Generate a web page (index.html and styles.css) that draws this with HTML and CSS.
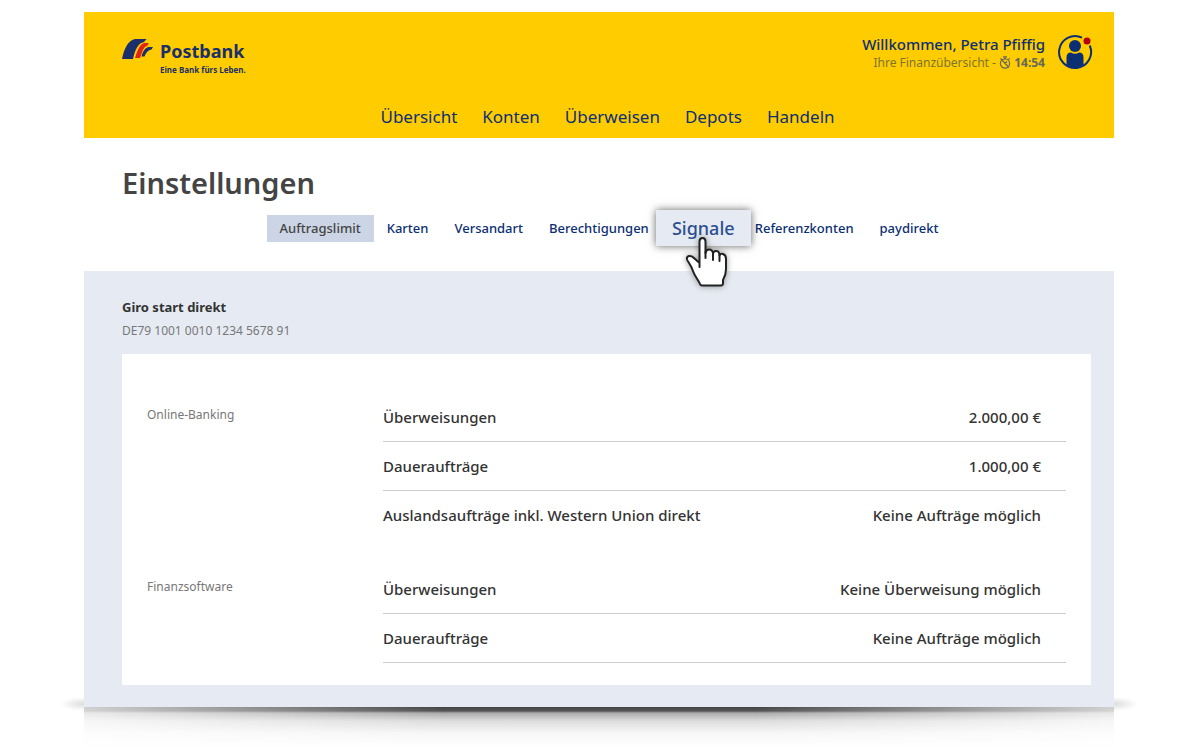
FILE: index.html
```html
<!DOCTYPE html>
<html lang="de">
<head>
<meta charset="utf-8">
<title>Postbank – Einstellungen</title>
<link rel="stylesheet" href="styles.css">
</head>
<body>
<div class="window">
  <header class="header">
    <div class="header-top">
      <a class="brand" href="#">
        <svg class="brand-mark" viewBox="0 0 32 22" width="32" height="22" aria-hidden="true">
          <path d="M0 21C2 12 5 3 13 1H24.500L22 4C16 5 13 12 11 21Z" fill="#1a2f6b"/>
          <path d="M13 20C15 13 18 6 22 5H27L25 8C21 9 20 15 18 20Z" fill="#e2231a"/>
          <path d="M19.500 18.500C21 13 23 9.500 27 9H31L29.500 11.500C26 12 24 14.500 22.500 18.500Z" fill="#1a2f6b"/>
        </svg>
        <span class="brand-text">
          <span class="brand-name">Postbank</span>
          <span class="brand-claim">Eine Bank fürs Leben.</span>
        </span>
      </a>
      <div class="user">
        <div class="user-text">
          <div class="user-name">Willkommen, Petra Pfiffig</div>
          <div class="user-info">Ihre Finanzübersicht -
            <svg class="timer" viewBox="0 0 12 13" width="12" height="13" aria-hidden="true">
              <g fill="none" stroke="#66675c" stroke-width="1.200"><circle cx="6" cy="7.500" r="4.600"/><path d="M4 .8H8M6 1V3M9.500 3.500L10.700 2.300M1.500 2.500L10 11.500M6 7.500L8 5.500"/></g>
            </svg>
            <b>14:54</b></div>
        </div>
        <button class="avatar" aria-label="Profil">
          <svg viewBox="0 0 36 36" width="36" height="36" aria-hidden="true">
            <path d="M32.700 11.500A16 16 0 1 1 25 3.600" fill="none" stroke="#0c2f74" stroke-width="2"/>
            <circle cx="18" cy="12" r="6" fill="#0c2f74"/>
            <path d="M9.500 31V23.500Q9.500 18.500 14 18.500Q18 21 22 18.500Q26.500 18.500 26.500 23.500V31Q18 37 9.500 31Z" fill="#0c2f74"/>
            <circle cx="30" cy="7" r="3.500" fill="#b5000f"/>
          </svg>
        </button>
      </div>
    </div>
    <nav class="main-nav">
      <a href="#">Übersicht</a><a href="#">Konten</a><a href="#">Überweisen</a><a href="#">Depots</a><a href="#">Handeln</a>
    </nav>
  </header>
  <section class="settings">
    <h1>Einstellungen</h1>
    <nav class="tabs">
      <a class="tab active" href="#">Auftragslimit</a>
      <a class="tab" href="#">Karten</a>
      <a class="tab" href="#">Versandart</a>
      <a class="tab" href="#">Berechtigungen</a>
      <span class="tab-slot">
        <a class="tab-zoom" href="#">Signale</a>
        <svg class="pointer" viewBox="0 0 44 52" width="44" height="52" aria-hidden="true">
          <path d="M14.500 31V5.500Q14.500 2 17.500 2Q20.500 2 20.500 5.500V17Q21 13.500 24 13.500Q27.500 13.500 28 17.500Q29 14.500 31.500 15Q34.500 15.500 34.500 19.500Q35.500 17 38 18Q41 19 41 23V33Q41 39 38 44V48Q37.500 49.500 36 49.500H17Q15.500 49.500 15 48C13 43 10 41 8 35C6 29 3 26 2 23.500Q1.500 20.500 4 20Q7 19.500 9.500 22.500L14.500 27" fill="#fff" stroke="#222" stroke-width="2" stroke-linejoin="round" stroke-linecap="round"/>
          <path d="M20.500 16V22M28 17V24M34.500 19V25" fill="none" stroke="#222" stroke-width="2" stroke-linecap="round"/>
        </svg>
      </span>
      <a class="tab" href="#">Referenzkonten</a>
      <a class="tab" href="#">paydirekt</a>
    </nav>
  </section>
  <main class="content">
    <h2>Giro start direkt</h2>
    <p class="iban">DE79 1001 0010 1234 5678 91</p>
    <div class="card">
      <section class="group">
        <h3>Online-Banking</h3>
        <table>
          <tr><th scope="row">Überweisungen</th><td>2.000,00 €</td></tr>
          <tr><th scope="row">Daueraufträge</th><td>1.000,00 €</td></tr>
          <tr class="plain"><th scope="row">Auslandsaufträge inkl. Western Union direkt</th><td>Keine Aufträge möglich</td></tr>
        </table>
      </section>
      <section class="group">
        <h3>Finanzsoftware</h3>
        <table>
          <tr><th scope="row">Überweisungen</th><td>Keine Überweisung möglich</td></tr>
          <tr><th scope="row">Daueraufträge</th><td>Keine Aufträge möglich</td></tr>
        </table>
      </section>
    </div>
  </main>
  <div class="shade"></div>
</div>
</body>
</html>
```
FILE: styles.css
```css
* { box-sizing: border-box; }
body { margin: 0; background: #fff; font-family: "Noto Sans", "Open Sans", sans-serif; color: #333; }
a { color: inherit; text-decoration: none; }
h1, h2, h3, p { margin: 0; }
.window { margin: 12px 86px 0 84px; }
.header { background: #fc0; color: #0c2f74; padding: 22px 21px 3px 38px; }
.header-top { display: flex; justify-content: space-between; align-items: flex-start; height: 65px; }
.brand { display: flex; gap: 6px; padding-top: 4px; color: #1a2f6b; }
.brand-text { display: flex; flex-direction: column; }
.brand-name { font-size: 18px; line-height: 26px; font-weight: 700; }
.brand-claim { font-size: 8px; line-height: 12px; font-weight: 700; }
.user { display: flex; gap: 12px; text-align: right; }
.user-name { font-size: 15px; line-height: 20px; font-weight: 500; }
.user-info { font-size: 12px; line-height: 17px; color: #7d7433; }
.user-info b { color: #66675c; }
.timer { vertical-align: -2px; }
.avatar { border: 0; padding: 0; background: none; width: 36px; height: 36px; }
.main-nav { display: flex; justify-content: center; gap: 25px; padding: 8px 0; font-size: 17px; line-height: 20px; }
.settings { padding: 25px 22px 29px 38px; }
h1 { font-size: 29px; line-height: 40px; font-weight: 600; color: #444; }
.tabs { display: flex; justify-content: center; margin-top: 12px; padding-left: 4px; color: #0c2f74; font-size: 13px; line-height: 27px; font-weight: 500; }
.tab { padding: 0 13px; }
.tab.active { background: #cbd5e5; color: #444; }
.tab-slot { position: relative; width: 80px; }
.tab-zoom { position: absolute; left: -6px; top: -5px; width: 95px; text-align: center; background: #e6ebf3; color: #2c4f90; font-size: 18px; line-height: 36px; box-shadow: 0 0 8px rgba(0,0,0,.6); }
.pointer { position: absolute; left: 23px; top: 21px; filter: drop-shadow(0 0 3px rgba(0,0,0,.4)); }
.content { background: #e6ebf3; padding: 26px 23px 22px 38px; }
h2 { font-size: 13px; line-height: 20px; font-weight: 700; }
.iban { font-size: 12px; line-height: 18px; margin-top: 5px; color: #777; }
.card { background: #fff; margin-top: 14px; padding: 39px 25px 22px; display: flex; flex-direction: column; gap: 26px; }
.group { display: grid; grid-template-columns: 236px 1fr; }
h3 { font-size: 12px; line-height: 20px; font-weight: 400; color: #777; padding-top: 12px; }
table { width: 100%; border-collapse: separate; border-spacing: 0; font-size: 15px; line-height: 20px; }
th, td { padding: 14px 0; font-weight: 500; border-bottom: 1px solid #ccc; }
th { text-align: left; }
td { text-align: right; padding-right: 25px; }
.plain th, .plain td { border-bottom: 0; }
.shade { position: relative; height: 40px; background: linear-gradient(90deg, rgba(255,255,255,.75), transparent 35%, transparent 65%, rgba(255,255,255,.75)), linear-gradient(#444, #555 4px, #aaa 6px, #ddd 14px, #f6f6f6 26px, #fff); }
.shade::before, .shade::after { content: ""; position: absolute; top: -10px; width: 24px; height: 14px; }
.shade::before { right: 100%; background: radial-gradient(100% 50% at 100% 50%, #ddd, transparent); }
.shade::after { left: 100%; background: radial-gradient(100% 50% at 0 50%, #ddd, transparent); }
```
